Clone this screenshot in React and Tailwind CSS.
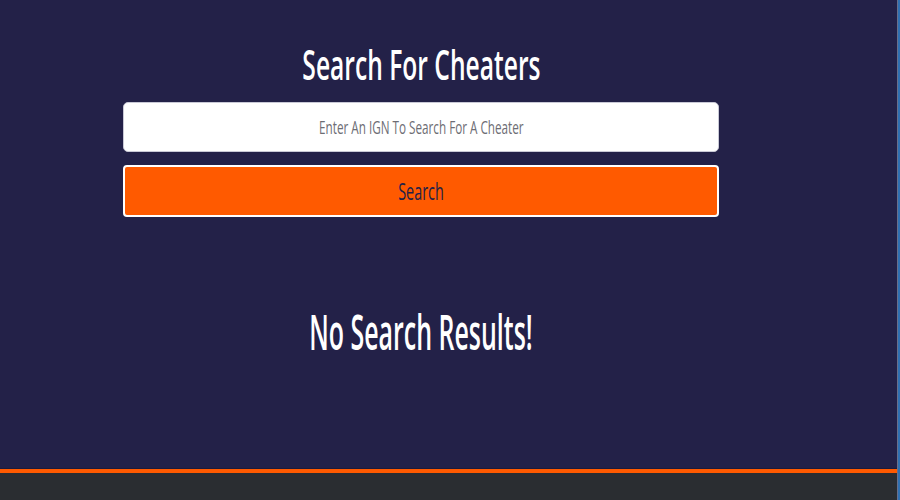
export default function App() {
  return (
    <div className="flex h-[500px] w-[900px] overflow-hidden bg-[#232148] font-['Open_Sans',sans-serif]">
      <div className="flex flex-1 flex-col">
        <main className="flex-1">
          <div className="flex w-[842px] flex-col items-center">
            <h1 className="mt-[39px] h-[50px] text-[41px] leading-[50px] font-semibold whitespace-nowrap text-white">
              <span className="inline-block scale-x-[0.6]">Search For Cheaters</span>
            </h1>
            <div className="mt-[13px] flex h-[50px] w-[596px] items-center justify-center rounded-[5px] border border-[#c9c9d6] bg-white">
              <span className="inline-block scale-x-[0.65] text-[18px] whitespace-nowrap text-[#6d6d74]">Enter An IGN To Search For A Cheater</span>
            </div>
            <button className="mt-[13px] flex h-[52px] w-[596px] items-center justify-center rounded-[4px] border-2 border-white bg-[#ff5a00]">
              <span className="inline-block scale-x-[0.6] text-[24px] font-medium text-[#232148]">Search</span>
            </button>
            <h2 className="mt-[85px] text-[48px] leading-[60px] font-semibold whitespace-nowrap text-white">
              <span className="inline-block scale-x-[0.52]">No Search Results!</span>
            </h2>
          </div>
        </main>
        <footer className="h-[32px] border-t border-[#1c1b3a]">
          <div className="h-[4px] bg-[#ff5a00]"></div>
          <div className="h-[28px] bg-[#2a2d31]"></div>
        </footer>
      </div>
      <div className="w-[3px] border-l border-[#6a6f8a] bg-[#2f6fb0]"></div>
    </div>
  );
}
